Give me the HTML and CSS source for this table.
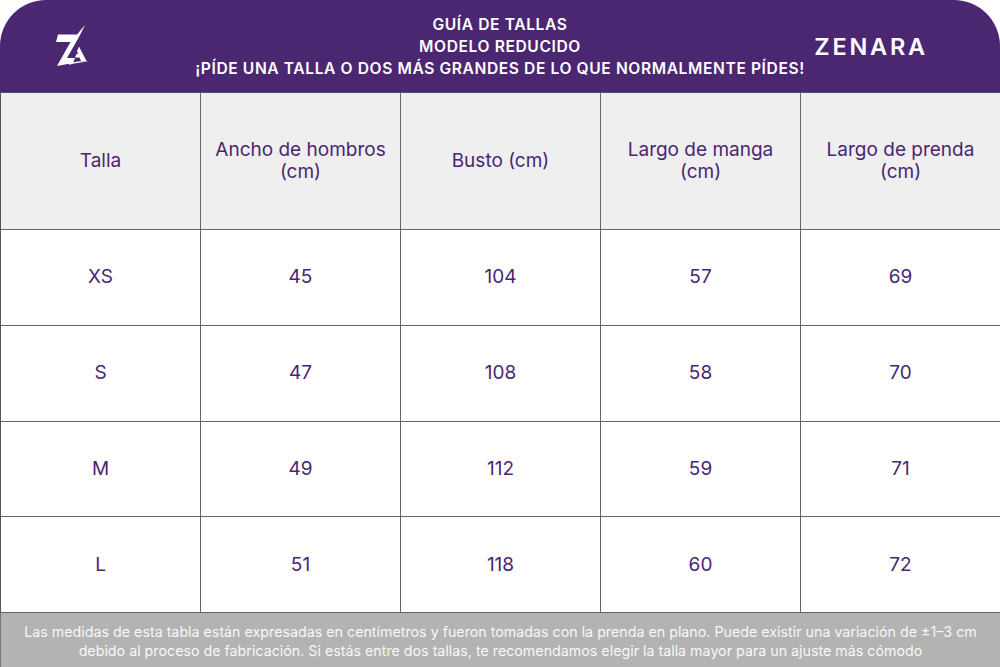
FILE: index.html
```html
<!DOCTYPE html>
<html lang="es">
<head>
<meta charset="utf-8">
<title>Guía de tallas</title>
<link rel="stylesheet" href="styles.css">
</head>
<body>
<div class="page">
  <header class="top">
    <div class="logo">
      <svg width="42" height="50" viewBox="0 0 42 50">
        <path fill="#fff" d="M8,13.5 L27,13.5 C30,10 32.5,7 35,4 C33,8 31,12 29,16 L17,37 L25,37 L23,42 L7,45 L20.5,21 L6,21 Z"/>
        <path fill="#fff" d="M29,25.5 L36.5,40 L31,40 L29.5,36.5 L25,36.5 L26.5,33 L28,33 L27,30 Z"/>
        <path fill="#fff" d="M19,42 C27,40 33,40 39,40.5 C32,41 26,42 19,43.8 Z"/>
      </svg>
    </div>
    <div class="titles">
      <div>GUÍA DE TALLAS</div>
      <div>MODELO REDUCIDO</div>
      <div>¡PÍDE UNA TALLA O DOS MÁS GRANDES DE LO QUE NORMALMENTE PÍDES!</div>
    </div>
    <div class="brand">ZENARA</div>
  </header>
  <div class="grid">
    <div class="cell head">Talla</div>
    <div class="cell head">Ancho de hombros<br>(cm)</div>
    <div class="cell head">Busto (cm)</div>
    <div class="cell head">Largo de manga<br>(cm)</div>
    <div class="cell head">Largo de prenda<br>(cm)</div>

    <div class="cell">XS</div><div class="cell">45</div><div class="cell">104</div><div class="cell">57</div><div class="cell">69</div>
    <div class="cell">S</div><div class="cell">47</div><div class="cell">108</div><div class="cell">58</div><div class="cell">70</div>
    <div class="cell">M</div><div class="cell">49</div><div class="cell">112</div><div class="cell">59</div><div class="cell">71</div>
    <div class="cell">L</div><div class="cell">51</div><div class="cell">118</div><div class="cell">60</div><div class="cell">72</div>
  </div>
  <footer class="note">
    Las medidas de esta tabla están expresadas en centímetros y fueron tomadas con la prenda en plano. Puede existir una variación de ±1–3 cm<br>
    debido al proceso de fabricación. Si estás entre dos tallas, te recomendamos elegir la talla mayor para un ajuste más cómodo
  </footer>
</div>
</body>
</html>
```
FILE: styles.css
```css
* { box-sizing: border-box; }
html, body { margin: 0; padding: 0; background: #fff; }
body { font-family: "Inter", "DejaVu Sans", sans-serif; }
.page { width: 1000px; height: 667px; overflow: hidden; display: flex; flex-direction: column; }

.top {
  height: 92px;
  background: #4b2671;
  border-radius: 46px 46px 0 0;
  display: flex;
  align-items: center;
  position: relative;
  color: #fff;
}
.logo { width: 42px; height: 50px; margin-left: 50px; }
.logo svg { display: block; }
.titles {
  position: absolute;
  left: 0; right: 0; top: 14px;
  text-align: center;
  font-weight: 600;
  font-size: 15.6px;
  line-height: 22px;
  letter-spacing: 0.6px;
}
.brand {
  margin-left: auto;
  margin-right: 72px;
  margin-top: 1px;
  font-size: 23.5px;
  font-weight: 600;
  letter-spacing: 2.8px;
  position: relative;
  z-index: 1;
}

.grid {
  display: grid;
  grid-template-columns: repeat(5, 200px);
  grid-template-rows: 137px repeat(4, 95.75px);
  border-top: 1px solid #555;
  border-left: 1px solid #555;
}
.cell {
  border-right: 1px solid #666;
  border-bottom: 1px solid #666;
  display: flex;
  align-items: center;
  justify-content: center;
  text-align: center;
  color: #4b2671;
  font-size: 19px;
  line-height: 22px;
  background: #fff;
}
.cell.head { background: #efefef; }

.note {
  flex: 1;
  background: #b3b3b3;
  color: #f7f7f7;
  text-align: center;
  font-size: 14.25px;
  line-height: 19px;
  padding-top: 9px;
  border-left: 1px solid #777;
}
```
